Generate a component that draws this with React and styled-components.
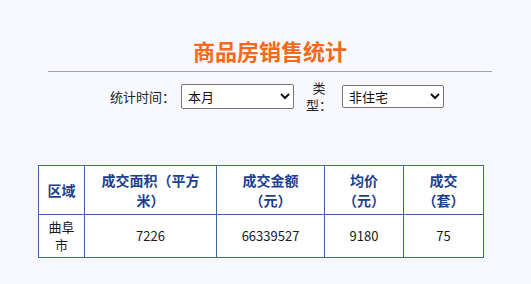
import React, { useState } from 'react';
import styled, { createGlobalStyle } from 'styled-components';

const GlobalStyle = createGlobalStyle`
  html, body {
    margin: 0;
    padding: 0;
    background-color: #f7f8fd;
    font-family: "Noto Sans CJK SC", "Noto Sans", sans-serif;
    color: #222;
  }
`;

const Page = styled.div`
  width: 531px;
  padding-top: 34px;
`;

const Header = styled.div`
  width: 444px;
  margin-left: 48px;
  text-align: center;
`;

const Title = styled.h2`
  margin: 0;
  font-size: 22px;
  line-height: 32px;
  font-weight: bold;
  color: #f4691a;
`;

const Rule = styled.hr`
  margin: 5px 0 0;
  border: none;
  border-top: 1px solid #a3a3a8;
  height: 0;
`;

const Filters = styled.div`
  display: flex;
  align-items: center;
  margin-top: 7px;
  padding-left: 110px;
  font-size: 13px;
`;

const Label = styled.span`
  display: inline-block;
  width: ${(p) => p.$width || 'auto'};
  margin-right: ${(p) => p.$gap || '6px'};
  text-align: center;
  line-height: 17px;
`;

const Select = styled.select`
  width: ${(p) => p.$width};
  height: ${(p) => p.$height};
  margin-right: 12px;
  font-family: "Noto Sans CJK SC", sans-serif;
  font-size: 13px;
  color: #111;
  background: #fff;
  border: 1px solid #767676;
  border-radius: 2px;
  padding: 0 2px;
`;

const Table = styled.table`
  margin: 52px 0 0 38px;
  width: 446px;
  border-collapse: collapse;
  table-layout: fixed;
  background: #fff;
`;

const Th = styled.th`
  border: 1px solid #3d66a8;
  color: #1d3f8f;
  font-size: 14px;
  line-height: 20px;
  font-weight: bold;
  padding: 4px ${(p) => p.$pad || '12px'};
  text-align: center;
`;

const Td = styled.td`
  border: 1px solid #3d66a8;
  font-size: 13px;
  line-height: 18px;
  padding: 3px ${(p) => p.$pad || '12px'};
  text-align: center;
  color: #1a1a1a;
`;

const rows = [
  { area: '曲阜市', size: 7226, amount: 66339527, price: 9180, count: 75 },
];

const App = () => {
  const [time, setTime] = useState('本月');
  const [type, setType] = useState('非住宅');

  return (
    <>
      <GlobalStyle />
      <Page>
        <Header>
          <Title>商品房销售统计</Title>
          <Rule />
        </Header>
        <Filters>
          <Label>统计时间：</Label>
          <Select $width="113px" $height="25px" value={time} onChange={(e) => setTime(e.target.value)}>
            <option>本月</option>
            <option>本季度</option>
            <option>本年</option>
          </Select>
          <Label $width="26px" $gap="10px">类型：</Label>
          <Select $width="102px" $height="23px" value={type} onChange={(e) => setType(e.target.value)}>
            <option>住宅</option>
            <option>非住宅</option>
          </Select>
        </Filters>
        <Table>
          <colgroup>
            <col style={{ width: 46 }} />
            <col style={{ width: 132 }} />
            <col style={{ width: 108 }} />
            <col style={{ width: 79 }} />
            <col style={{ width: 80 }} />
          </colgroup>
          <thead>
            <tr>
              <Th $pad="4px">区域</Th>
              <Th>成交面积（平方米）</Th>
              <Th>成交金额（元）</Th>
              <Th $pad="10px">均价（元）</Th>
              <Th $pad="12px">成交（套）</Th>
            </tr>
          </thead>
          <tbody>
            {rows.map((r) => (
              <tr key={r.area}>
                <Td $pad="6px">{r.area}</Td>
                <Td>{r.size}</Td>
                <Td>{r.amount}</Td>
                <Td>{r.price}</Td>
                <Td>{r.count}</Td>
              </tr>
            ))}
          </tbody>
        </Table>
      </Page>
    </>
  );
};

export default App;
